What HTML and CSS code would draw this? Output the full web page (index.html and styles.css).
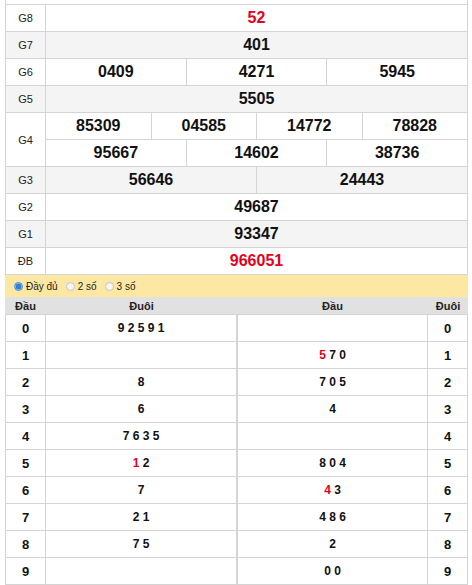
FILE: index.html
```html
<!DOCTYPE html>
<html lang="vi">
<head>
<meta charset="utf-8">
<title>Kết quả xổ số</title>
<link rel="stylesheet" href="styles.css">
</head>
<body>
<div class="wrap">
  <div class="stub"></div>
  <div class="results">
    <div class="row"><div class="lbl">G8</div><div class="nums"><div class="n red">52</div></div></div>
    <div class="row alt"><div class="lbl">G7</div><div class="nums"><div class="n">401</div></div></div>
    <div class="row"><div class="lbl">G6</div><div class="nums"><div class="n">0409</div><div class="n">4271</div><div class="n">5945</div></div></div>
    <div class="row alt"><div class="lbl">G5</div><div class="nums"><div class="n">5505</div></div></div>
    <div class="row"><div class="lbl">G4</div>
      <div class="subs">
        <div class="nums"><div class="n">85309</div><div class="n">04585</div><div class="n">14772</div><div class="n">78828</div></div>
        <div class="nums"><div class="n">95667</div><div class="n">14602</div><div class="n">38736</div></div>
      </div>
    </div>
    <div class="row alt"><div class="lbl">G3</div><div class="nums"><div class="n">56646</div><div class="n">24443</div></div></div>
    <div class="row"><div class="lbl">G2</div><div class="nums"><div class="n">49687</div></div></div>
    <div class="row alt"><div class="lbl">G1</div><div class="nums"><div class="n">93347</div></div></div>
    <div class="row"><div class="lbl">ĐB</div><div class="nums"><div class="n red">966051</div></div></div>
  </div>

  <div class="opts">
    <label class="opt"><span class="radio on"></span>Đầy đủ</label>
    <label class="opt"><span class="radio"></span>2 số</label>
    <label class="opt"><span class="radio"></span>3 số</label>
  </div>

  <div class="loto">
    <div class="lhead"><div>Đầu</div><div>Đuôi</div><div>Đầu</div><div>Đuôi</div></div>
    <div class="lrow"><div class="k">0</div><div class="v">9 2 5 9 1</div><div class="v"></div><div class="k">0</div></div>
    <div class="lrow"><div class="k">1</div><div class="v"></div><div class="v"><span class="red">5</span> 7 0</div><div class="k">1</div></div>
    <div class="lrow"><div class="k">2</div><div class="v">8</div><div class="v">7 0 5</div><div class="k">2</div></div>
    <div class="lrow"><div class="k">3</div><div class="v">6</div><div class="v">4</div><div class="k">3</div></div>
    <div class="lrow"><div class="k">4</div><div class="v">7 6 3 5</div><div class="v"></div><div class="k">4</div></div>
    <div class="lrow"><div class="k">5</div><div class="v"><span class="red">1</span> 2</div><div class="v">8 0 4</div><div class="k">5</div></div>
    <div class="lrow"><div class="k">6</div><div class="v">7</div><div class="v"><span class="red">4</span> 3</div><div class="k">6</div></div>
    <div class="lrow"><div class="k">7</div><div class="v">2 1</div><div class="v">4 8 6</div><div class="k">7</div></div>
    <div class="lrow"><div class="k">8</div><div class="v">7 5</div><div class="v">2</div><div class="k">8</div></div>
    <div class="lrow"><div class="k">9</div><div class="v"></div><div class="v">0 0</div><div class="k">9</div></div>
  </div>
</div>
</body>
</html>
```

FILE: styles.css
```css
* { box-sizing: border-box; }
body {
  margin: 0;
  background: #fff;
  font-family: "Liberation Sans", Arial, sans-serif;
  color: #111;
}
.wrap { margin-left: 5px; width: 463px; }
.stub {
  height: 4px;
  border-left: 1px solid #d4d4d4;
  border-right: 1px solid #d4d4d4;
}
.results {
  border: 1px solid #d4d4d4;
  border-bottom: 0;
}
.row {
  display: flex;
  border-bottom: 1px solid #d4d4d4;
}
.row.alt { background: #f4f4f4; }
.lbl {
  flex: none;
  width: 40px;
  border-right: 1px solid #d4d4d4;
  display: flex;
  align-items: center;
  justify-content: center;
  font-size: 11px;
  color: #222;
}
.nums { flex: 1; display: flex; height: 26px; }
.subs { flex: 1; display: flex; flex-direction: column; }
.subs .nums { flex: none; height: 26px; }
.subs .nums + .nums { border-top: 1px solid #d4d4d4; height: 27px; }
.n {
  flex: 1 1 0;
  display: flex;
  align-items: center;
  justify-content: center;
  font-size: 16px;
  font-weight: bold;
  color: #111;
  border-right: 1px solid #d4d4d4;
}
.n:last-child { border-right: 0; }
.red { color: #e5001c !important; }
.n.red { color: #e5001c; }

.opts {
  height: 22px;
  background: #fde8a3;
  display: flex;
  align-items: center;
  padding-left: 9px;
  gap: 8px;
  font-size: 10px;
  color: #222;
}
.opt { display: flex; align-items: center; gap: 3px; }
.radio {
  width: 9px;
  height: 9px;
  border-radius: 50%;
  border: 1px solid #c4c4c4;
  background: #f6f6f6;
  display: inline-block;
}
.radio.on {
  border-color: #3a8ee6;
  background: radial-gradient(circle, #2f7fd8 0 2.6px, #9cc6f2 3.2px);
}

.loto { width: 463px; }
.lhead, .lrow {
  display: grid;
  grid-template-columns: 41px 191px 191px 40px;
}
.lhead {
  height: 18px;
  background: #e1e1e1;
  border-bottom: 1px solid #d4d4d4;
  font-size: 11px;
  font-weight: bold;
  color: #222;
}
.lhead > div { display: flex; align-items: center; justify-content: center; }
.lrow {
  height: 27px;
  border-bottom: 1px solid #d4d4d4;
}
.lrow > div {
  display: flex;
  align-items: center;
  justify-content: center;
  font-size: 12px;
  font-weight: bold;
  color: #111;
  white-space: pre;
}
.lrow > div:nth-child(1) { border-left: 1px solid #d4d4d4; border-right: 1px solid #d4d4d4; }
.lrow > div:nth-child(2) { border-right: 1px solid #d4d4d4; }
.lrow > div:nth-child(3) { border-left: 1px solid #d4d4d4; border-right: 1px solid #d4d4d4; }
.lrow > div:nth-child(4) { border-right: 1px solid #d4d4d4; }
.k { font-size: 13px !important; }
```
